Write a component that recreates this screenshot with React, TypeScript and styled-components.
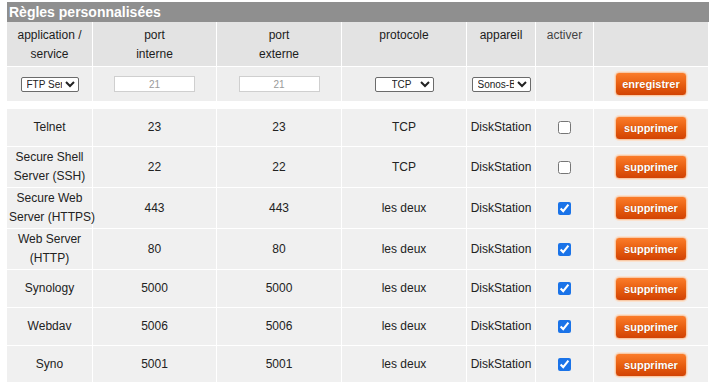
import styled, { createGlobalStyle } from "styled-components";

const GlobalStyle = createGlobalStyle`
    body {
        margin: 0;
        background: #ffffff;
        font-family: "Liberation Sans", Arial, sans-serif;
    }
`;

type Rule = {
    name: string[];
    internal: string;
    external: string;
    protocol: string;
    device: string;
    active: boolean;
};

const rules: Rule[] = [
    { name: ["Telnet"], internal: "23", external: "23", protocol: "TCP", device: "DiskStation", active: false },
    { name: ["Secure Shell", "Server (SSH)"], internal: "22", external: "22", protocol: "TCP", device: "DiskStation", active: false },
    { name: ["Secure Web", "Server (HTTPS)"], internal: "443", external: "443", protocol: "les deux", device: "DiskStation", active: true },
    { name: ["Web Server", "(HTTP)"], internal: "80", external: "80", protocol: "les deux", device: "DiskStation", active: true },
    { name: ["Synology"], internal: "5000", external: "5000", protocol: "les deux", device: "DiskStation", active: true },
    { name: ["Webdav"], internal: "5006", external: "5006", protocol: "les deux", device: "DiskStation", active: true },
    { name: ["Syno"], internal: "5001", external: "5001", protocol: "les deux", device: "DiskStation", active: true },
];

const App = () => {
    return (
        <Page>
            <GlobalStyle />
            <Panel>
                <Title>Règles personnalisées</Title>
                <Table>
                    <colgroup>
                        <col style={{ width: 85 }} />
                        <col style={{ width: 123 }} />
                        <col style={{ width: 124 }} />
                        <col style={{ width: 124 }} />
                        <col style={{ width: 68 }} />
                        <col style={{ width: 57 }} />
                        <col />
                    </colgroup>
                    <thead>
                        <tr>
                            <HeadCell>application /<br />service</HeadCell>
                            <HeadCell>port<br />interne</HeadCell>
                            <HeadCell>port<br />externe</HeadCell>
                            <HeadCell>protocole</HeadCell>
                            <HeadCell>appareil</HeadCell>
                            <HeadCell $light>activer</HeadCell>
                            <HeadCell />
                        </tr>
                    </thead>
                    <tbody>
                        <tr>
                            <FormCell>
                                <Select $width={58} defaultValue="ftp">
                                    <option value="ftp">FTP Server</option>
                                </Select>
                            </FormCell>
                            <FormCell>
                                <PortInput defaultValue="21" />
                            </FormCell>
                            <FormCell>
                                <PortInput defaultValue="21" />
                            </FormCell>
                            <FormCell>
                                <Select $width={59} $pad={12} defaultValue="tcp">
                                    <option value="tcp">TCP</option>
                                </Select>
                            </FormCell>
                            <FormCell>
                                <Select $width={59} defaultValue="sonos">
                                    <option value="sonos">Sonos-B8E93</option>
                                </Select>
                            </FormCell>
                            <FormCell />
                            <FormCell>
                                <OrangeButton>enregistrer</OrangeButton>
                            </FormCell>
                        </tr>
                        <tr>
                            <Spacer colSpan={7} />
                        </tr>
                        {rules.map((rule) => (
                            <tr key={rule.name.join(" ")}>
                                <Cell $tall={rule.name.length > 1}>
                                    {rule.name.map((line, i) => (
                                        <Line key={i}>{line}</Line>
                                    ))}
                                </Cell>
                                <Cell>{rule.internal}</Cell>
                                <Cell>{rule.external}</Cell>
                                <Cell>{rule.protocol}</Cell>
                                <Cell>{rule.device}</Cell>
                                <Cell>
                                    <Check type="checkbox" defaultChecked={rule.active} />
                                </Cell>
                                <Cell>
                                    <OrangeButton>supprimer</OrangeButton>
                                </Cell>
                            </tr>
                        ))}
                    </tbody>
                </Table>
            </Panel>
        </Page>
    );
};

export default App;

const Page = styled.div`
    padding: 2px 0 0 7px;
    width: 709px;
    box-sizing: border-box;
    overflow: hidden;
`;
const Panel = styled.div`
    width: 703px;
`;
const Title = styled.div`
    height: 20px;
    background-color: #8f8f8f;
    color: #ffffff;
    font-size: 14px;
    font-weight: bold;
    line-height: 20px;
    padding-left: 2px;
`;
const Table = styled.table`
    width: 100%;
    table-layout: fixed;
    border-collapse: separate;
    border-spacing: 1px;
    margin: -1px 0 0 -1px;
    font-size: 12px;
    color: #222222;
`;
const HeadCell = styled.th<{ $light?: boolean }>`
    height: 40px;
    padding: 4px 2px 0;
    background-color: #e3e3e3;
    vertical-align: top;
    text-align: center;
    font-weight: normal;
    line-height: 19px;
    color: ${(p) => (p.$light ? "#444444" : "#1c1c1c")};
`;
const FormCell = styled.td`
    height: 34px;
    padding: 0;
    background-color: #eeeeee;
    text-align: center;
    vertical-align: middle;
`;
const Spacer = styled.td`
    height: 6px;
    padding: 0;
    background-color: #ffffff;
`;
const Cell = styled.td<{ $tall?: boolean }>`
    height: ${(p) => (p.$tall ? "40px" : "37px")};
    padding: 0 2px;
    background-color: #f0f0f0;
    text-align: center;
    vertical-align: middle;
    line-height: 19px;
    color: #222222;
`;
const Line = styled.div`
    white-space: nowrap;
`;
const Select = styled.select<{ $width: number; $pad?: number }>`
    width: ${(p) => p.$width}px;
    height: 15px;
    padding: 0 0 0 ${(p) => p.$pad ?? 1}px;
    border: 1px solid #6b6b6b;
    border-radius: 2px;
    background-color: #ffffff;
    font-family: "Liberation Sans", Arial, sans-serif;
    font-size: 10px;
    color: #222222;
`;
const PortInput = styled.input`
    width: 81px;
    height: 16px;
    box-sizing: border-box;
    padding: 0;
    border: 1px solid #cfcfcf;
    background-color: #ffffff;
    font-family: "Liberation Sans", Arial, sans-serif;
    font-size: 10px;
    color: #9a9a9a;
    text-align: center;
`;
const Check = styled.input`
    width: 13px;
    height: 13px;
    margin: 0;
    vertical-align: middle;
    accent-color: #1a73e8;
`;
const OrangeButton = styled.button`
    width: 72px;
    height: 24px;
    padding: 0;
    border: 1px solid #f7c9a7;
    border-radius: 4px;
    background: linear-gradient(#fb7c2a, #e65c0e 55%, #d24304);
    box-shadow: 0 0 0 1px #fbe2cf;
    color: #ffffff;
    font-family: "Liberation Sans", Arial, sans-serif;
    font-size: 11px;
    font-weight: bold;
    text-shadow: 0 0 1px rgba(120, 40, 0, 0.5);
`;
